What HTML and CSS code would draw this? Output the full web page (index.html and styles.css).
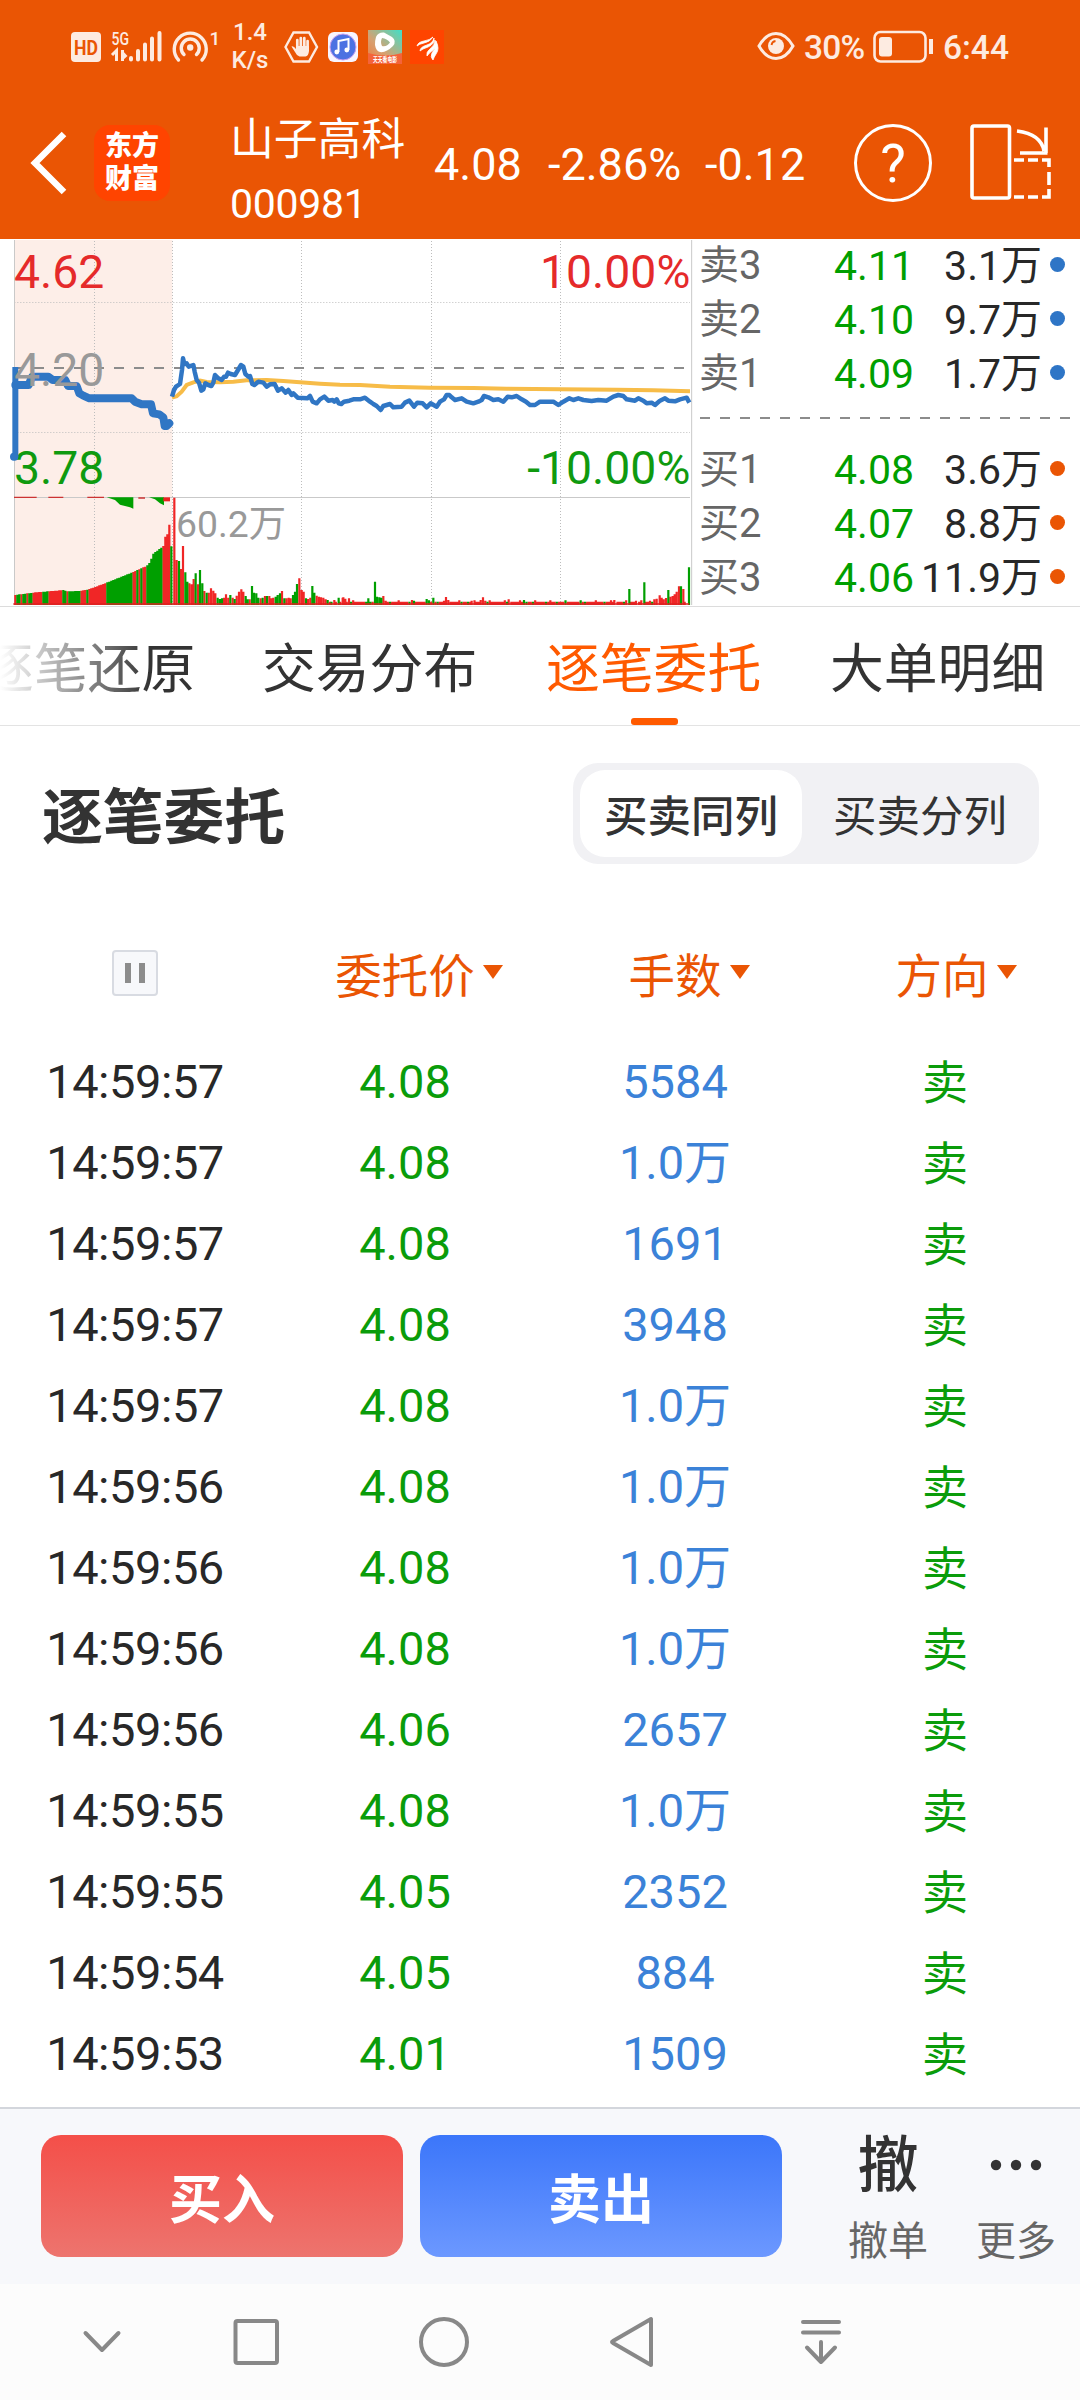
FILE: index.html
```html
<!DOCTYPE html>
<html lang="zh-CN">
<head>
<meta charset="utf-8">
<title>山子高科 000981</title>
<link rel="stylesheet" href="styles.css">
</head>
<body>
<header class="top">
  <div class="status">
    <svg class="st-icons" width="162" height="44" viewBox="66 20 162 44">
      <rect x="71" y="32" width="30" height="30" rx="4" fill="#fdebe1"/>
      <text class="hd" x="86" y="54.500" text-anchor="middle" textLength="24" lengthAdjust="spacingAndGlyphs">HD</text>
      <text class="g5" x="111.500" y="44.500" textLength="17.500" lengthAdjust="spacingAndGlyphs">5G</text>
      <path d="M112 55l4.500-4.500V61M122.500 50v11" fill="none" stroke="#fdebe1" stroke-width="3"/><path d="M122 50l5.500 6-5.500 5z" fill="#fdebe1"/>
      <path d="M131 58v1.500M138 51v8.500M145 44.500v15M152 38.500v21M159.500 33v26.500" stroke="#fdebe1" stroke-width="4" stroke-linecap="round"/>
      <g fill="none" stroke="#fdebe1" stroke-width="3.400" stroke-linecap="round"><path d="M178.500 60a16 16 0 1 1 23.500 0M184 54.500a9 9 0 1 1 12.500 0"/></g>
      <circle cx="190.200" cy="47.500" r="3.200" fill="#fdebe1"/>
      <text class="g5" x="209.500" y="44.500">1</text>
    </svg>
    <div class="speed"><span>1.4</span><span>K/s</span></div>
    <svg class="st-apps" width="162" height="40" viewBox="283 27 162 40">
      <path d="M285.500 47l8-14.500h15.500l8 14.500-8 14.500h-15.500z" fill="none" stroke="#fdebe1" stroke-width="2.400"/>
      <path d="M297.300 40v8M300.800 38v9M304.300 38v9M307.600 41v8" stroke="#fdebe1" stroke-width="2.700" stroke-linecap="round"/><path d="M291.500 46.500q2-.8 4.500 2.500v-3h13v5q-.5 5-3.500 5.500h-6q-3-1-4.500-4.500z" fill="#fdebe1"/>
      <rect x="328" y="32" width="30" height="30" rx="6" fill="#f8f5ff"/>
      <circle cx="343" cy="47" r="13" fill="#4c72e2" stroke="#c9a0ee" stroke-width="1"/>
      <path d="M338.500 52v-11l10-2v11" fill="none" stroke="#fff" stroke-width="2"/><circle cx="336.800" cy="52" r="2.400" fill="#fff"/><circle cx="346.800" cy="50" r="2.400" fill="#fff"/>
      <defs><linearGradient id="vid" x1="0" y1="1" x2="1" y2="0"><stop offset="0" stop-color="#f07a3c"/><stop offset=".4" stop-color="#d8a070"/><stop offset="1" stop-color="#3fe0c8"/></linearGradient></defs>
      <rect x="368" y="30" width="34" height="34" fill="url(#vid)"/><path d="M368 53q17 5 34 0v11h-34z" fill="#f4633a"/>
      <path fill-rule="evenodd" d="M376 37q2-5 8-4.500l8 4.500q5 4 1 9-7 7-13 6-4-1-5-7 0-5 1-8zM382 38q-2 4 0 8 5 1 8-3.500-3-4-8-4.500z" fill="#fff"/>
      <text class="vid-t" x="385" y="61.500" text-anchor="middle" textLength="24" lengthAdjust="spacingAndGlyphs">天天看电影</text>
      <rect x="410" y="30" width="34" height="34" fill="#ff4400"/>
      <path d="M417 46q1-4 7-5 6-1 9-4-3 5-9 6-5 1-7 3zM420 51q0-4 7-6 6-2 7-7 1 6-6 9-6 2-8 4zM427 56q-1-4 3-7 5-4 5-9 2 7-2 10-4 3-6 6zM433 60q-3-3-1-7 4-5 4-12 4 8 0 13-2 3-3 6z" fill="#fff" stroke="#fff" stroke-width=".8"/>
    </svg>
    <svg class="eye" width="38" height="30" viewBox="0 0 38 30"><path d="M2 15Q9 2.500 19 2.500T36 15Q29 27.500 19 27.500T2 15z" fill="none" stroke="#fdebe1" stroke-width="3"/><circle cx="19" cy="15" r="8" fill="#fdebe1"/><path d="M14.500 14q.5-3.500 4-4" fill="none" stroke="#ea5504" stroke-width="1.800"/></svg>
    <span class="pct">30%</span>
    <svg class="batt" width="62" height="34" viewBox="0 0 62 34"><rect x="1.500" y="2" width="51" height="29.500" rx="6" fill="none" stroke="#fdebe1" stroke-width="2.600"/><rect x="6" y="7" width="13" height="19.500" rx="3" fill="#fdebe1"/><path d="M58 9v15" stroke="#fdebe1" stroke-width="4"/></svg>
    <span class="clock">6:44</span>
  </div>
  <div class="bar">
    <svg class="back" width="40" height="66" viewBox="0 0 40 66"><path d="M34 4L5 33l29 29" fill="none" stroke="#fff" stroke-width="6.500"/></svg>
    <div class="logo"><span>东方</span><span>财富</span></div>
    <div class="name"><span class="cn">山子高科</span><span class="code">000981</span></div>
    <div class="quote"><span class="q1">4.08</span><span class="q2">-2.86%</span><span class="q3">-0.12</span></div>
    <div class="help">?</div>
    <svg class="rot" width="84" height="78" viewBox="0 0 84 78"><g fill="none" stroke="#fff" stroke-width="3.600"><rect x="2" y="3" width="37.500" height="72" rx="2"/><path d="M47 8Q71 11 74 28M76 4.500V30M50 30h27.500"/><path d="M44 37h10M58 37h10M72 37h7v7M79 49v13M79 66v8h-7M68 74H58M54 74H44"/></g></svg>
  </div>
</header>

<section class="market">
  <svg class="chart" width="694" height="366" viewBox="0 30 2082 1098">
    <rect x="43" y="30" width="474" height="1095" fill="#fdeee8"/>
    <g fill="none" stroke="#bdbdbd" stroke-width="3">
      <path stroke-dasharray="3 6" d="M283.500 33V1125M517.500 33V1125M904.500 33V1125M1294.500 33V1125M1681.500 33V1125M43 217.500H2070M43 607.500H2070"/>
      <path stroke="#c9c9c9" d="M43.500 30V1125M2075 30V1125M43 802.500H2070"/>
    </g>
    <path d="M42 414H2055" stroke="#8c8c8c" stroke-width="6" stroke-dasharray="30 30"/>
    <g id="bars" fill="none" stroke-width="6.600"></g>
    <path d="M42 802H110M145 802h45M262 802h50M415 804h20M485 808h22" stroke="#c33" stroke-width="4"/>
    <path d="M320 802H400V836L390 832 360 824 345 810zM447 802H492V826L480 820 465 808z" fill="#009f00"/>
    <path d="M490 802h20v12h-20z" fill="#e22"/>
    <text class="ax up" x="42" y="174">4.62</text>
    <text class="ax down" x="42" y="762">3.78</text>
    <text class="ax up" x="2071" y="174" text-anchor="end">10.00%</text>
    <text class="ax down" x="2071" y="762" text-anchor="end">-10.00%</text>
    <text class="vol" x="528" y="920">60.2万</text>
    <path d="M516 503l14-4 15-14 15-20 20-8 20-5 20 4 40 1 40-2 40-4 60-1 50 3 50 4 60 4 60 3 60 1 90 5 120 3 130 1 100 2 160 2 170 1 110 2 110 3" fill="none" stroke="#f7bc48" stroke-width="12"/>
    <g fill="none" stroke="#3076c4" stroke-linejoin="round">
      <path d="M46 411V680" stroke-width="18"/>
      <path d="M42 680h1M46 465H86L96 440H145L158 450H196L204 468H230L238 490 250 497 268 505H395L405 515 425 523H453L459 550 478 553 490 562 494 588H500L508 580" stroke-width="24" stroke-linecap="round"/>
      <path stroke-width="13.500" d="M516 500L522 480 528 470 540 462 546 420 549 385 553 402 560 400 566 410 580 405 584 425 590 450 597 458 604 482 610 478 616 460 625 465 634 468 640 458 645 435 655 445 665 450 672 440 678 440 684 428 692 432 705 435 714 420 723 405 730 410 736 432 745 440 750 438 757 462 763 465 775 455 790 458 800 470 810 463 824 462 834 482 845 475 857 488 865 480 875 495 880 490 893 503 922 505 930 498 938 515 950 520 960 508 973 500 985 512 998 510 1003 515 1010 508 1016 520 1024 522 1032 515 1048 512 1060 508 1080 508 1095 503 1110 515 1120 522 1130 528 1142 540 1150 528 1170 522 1180 532 1205 530 1215 518 1228 512 1242 530 1252 518 1268 520 1280 532 1292 520 1310 530 1320 515 1332 508 1340 495 1348 495 1355 502 1365 510 1385 505 1400 515 1420 520 1435 515 1445 510 1452 498 1465 502 1480 510 1495 508 1510 515 1523 500 1535 502 1550 498 1565 508 1578 515 1590 525 1605 525 1620 515 1660 515 1675 525 1690 515 1708 505 1720 510 1735 505 1750 510 1775 513 1795 510 1820 512 1840 500 1855 495 1870 498 1880 508 1905 512 1915 505 1930 512 1940 520 1955 518 1965 525 1980 512 1995 505 2005 512 2025 514 2040 508 2060 503 2068 518"/>
    </g>
    <text class="ax mid" x="42" y="468">4.20</text>
  </svg>
  <div class="book">
    <div class="lv"><span class="n">卖3</span><span class="p">4.11</span><span class="v">3.1万</span><i class="dot sell"></i></div>
    <div class="lv"><span class="n">卖2</span><span class="p">4.10</span><span class="v">9.7万</span><i class="dot sell"></i></div>
    <div class="lv"><span class="n">卖1</span><span class="p">4.09</span><span class="v">1.7万</span><i class="dot sell"></i></div>
    <div class="sep"></div>
    <div class="lv"><span class="n">买1</span><span class="p">4.08</span><span class="v">3.6万</span><i class="dot buy"></i></div>
    <div class="lv"><span class="n">买2</span><span class="p">4.07</span><span class="v">8.8万</span><i class="dot buy"></i></div>
    <div class="lv"><span class="n">买3</span><span class="p">4.06</span><span class="v">11.9万</span><i class="dot buy"></i></div>
  </div>
</section>

<nav class="tabs">
  <a class="tab faded">逐笔还原</a><a class="tab">交易分布</a><a class="tab on">逐笔委托</a><a class="tab">大单明细</a>
</nav>

<section class="head">
  <h1>逐笔委托</h1>
  <div class="seg"><span class="seg-i on">买卖同列</span><span class="seg-i">买卖分列</span></div>
</section>

<section class="orders">
  <div class="row th">
    <span><i class="pause"></i></span><span class="sort s1">委托价<i class="tri"></i></span><span class="sort s2">手数<i class="tri"></i></span><span class="sort s3">方向<i class="tri"></i></span>
  </div>
  <div class="row"><span class="t">14:59:57</span><span class="g">4.08</span><span class="q">5584</span><span class="d">卖</span></div>
  <div class="row"><span class="t">14:59:57</span><span class="g">4.08</span><span class="q">1.0万</span><span class="d">卖</span></div>
  <div class="row"><span class="t">14:59:57</span><span class="g">4.08</span><span class="q">1691</span><span class="d">卖</span></div>
  <div class="row"><span class="t">14:59:57</span><span class="g">4.08</span><span class="q">3948</span><span class="d">卖</span></div>
  <div class="row"><span class="t">14:59:57</span><span class="g">4.08</span><span class="q">1.0万</span><span class="d">卖</span></div>
  <div class="row"><span class="t">14:59:56</span><span class="g">4.08</span><span class="q">1.0万</span><span class="d">卖</span></div>
  <div class="row"><span class="t">14:59:56</span><span class="g">4.08</span><span class="q">1.0万</span><span class="d">卖</span></div>
  <div class="row"><span class="t">14:59:56</span><span class="g">4.08</span><span class="q">1.0万</span><span class="d">卖</span></div>
  <div class="row"><span class="t">14:59:56</span><span class="g">4.06</span><span class="q">2657</span><span class="d">卖</span></div>
  <div class="row"><span class="t">14:59:55</span><span class="g">4.08</span><span class="q">1.0万</span><span class="d">卖</span></div>
  <div class="row"><span class="t">14:59:55</span><span class="g">4.05</span><span class="q">2352</span><span class="d">卖</span></div>
  <div class="row"><span class="t">14:59:54</span><span class="g">4.05</span><span class="q">884</span><span class="d">卖</span></div>
  <div class="row"><span class="t">14:59:53</span><span class="g">4.01</span><span class="q">1509</span><span class="d">卖</span></div>
</section>

<footer class="actions">
  <button class="btn buy-b">买入</button>
  <button class="btn sell-b">卖出</button>
  <div class="act a1"><span class="ic">撤</span><span class="lb">撤单</span></div>
  <div class="act a2"><span class="ic"><svg width="56" height="14" viewBox="0 0 56 14"><g fill="#333"><circle cx="8" cy="7" r="5.200"/><circle cx="28" cy="7" r="5.200"/><circle cx="48" cy="7" r="5.200"/></g></svg></span><span class="lb">更多</span></div>
</footer>

<div class="sysnav">
  <svg width="1080" height="116" viewBox="0 2284 1080 116"><g fill="none" stroke="#888" stroke-width="4" stroke-linecap="round" stroke-linejoin="round"><path d="M85.500 2333L102 2350l16.500-17"/><rect x="235.500" y="2321" width="41.500" height="42" rx="2"/><circle cx="444" cy="2342" r="23"/><path d="M651 2319v46l-38-22q-2-1 0-2z"/><path d="M803 2322h36M803 2332.500h36M821 2342v20M807 2347.500l14 14.500 14-14.500"/></g></svg>
</div>
<script src="chart.js"></script>
</body>
</html>
```
FILE: styles.css
```css
* { box-sizing: border-box; }
body { margin: 0; width: 1080px; height: 2400px; overflow: hidden; background: #fff; font-family: Roboto, "Noto Sans CJK SC", sans-serif; color: #282828; display: flex; flex-direction: column; }
i { font-style: normal; }
.top { height: 239px; background: #ea5504; color: #fff; flex: none; display: flex; flex-direction: column; }
.status { height: 92px; display: flex; align-items: flex-start; color: #fdebe1; padding-left: 66px; }
.st-icons { margin-top: 20px; flex: none; }
.hd { font: 700 20px Roboto, sans-serif; fill: #ea5504; }
.g5 { font: 500 19px Roboto, sans-serif; fill: #fdebe1; }
.speed { width: 50px; margin: 18px 13px 0 -3px; display: flex; flex-direction: column; align-items: center; font-size: 24px; line-height: 28px; font-weight: 500; }
.st-apps { margin: 27px 0 0 -5px; flex: none; }
.vid-t { font: 700 7px "Noto Sans CJK SC", sans-serif; fill: #fff; }
.eye { margin: 31px 0 0 312px; flex: none; }
.pct, .clock { font-size: 33.500px; line-height: 40px; font-weight: 500; margin-top: 28px; }
.pct { width: 69px; margin-left: 9px; letter-spacing: -.8px; }
.batt { margin: 30px 0 0 0; flex: none; }
.clock { margin-left: 8px; }
.bar { height: 147px; display: flex; align-items: flex-start; }
.back { margin: 38px 0 0 30px; flex: none; }
.logo { width: 76px; height: 76px; margin: 33px 0 0 24px; border-radius: 16px; background: #ff4400; display: flex; flex-direction: column; align-items: center; font: 900 27px/33px "Noto Sans CJK SC", sans-serif; padding-top: 2px; }
.name { margin: 22px 0 0 60px; width: 204px; display: flex; flex-direction: column; white-space: nowrap; }
.cn { font-size: 43.800px; line-height: 52px; }
.code { font-size: 41px; line-height: 52px; margin-top: 12px; letter-spacing: -.3px; }
.quote { display: flex; font-size: 45px; line-height: 60px; margin-top: 43px; width: 419px; white-space: nowrap; }
.q1 { width: 114px; } .q2 { width: 157px; }
.help { width: 78px; height: 78px; border: 3.500px solid #fff; border-radius: 50%; margin: 32px 0 0 1px; text-align: center; font-size: 54px; line-height: 73px; }
.rot { margin: 31px 0 0 38px; flex: none; }
.market { height: 368px; flex: none; display: flex; border-bottom: 1px solid #dcdcdc; padding-top: 1px; }
.chart { flex: none; }
.ax { font-size: 139px; }
.up { fill: #e52a2a; } .down { fill: #0f9a0f; } .mid { fill: #999; }
.vol { font-size: 112px; fill: #999; }
.book { flex: 1; padding: 0 0 0 5px; font-size: 41px; display: flex; flex-direction: column; }
.lv { height: 54px; line-height: 50px; display: flex; align-items: center; white-space: nowrap; }
.lv span { margin-top: -3px; }
.lv .n { width: 112px; color: #666; font-size: 40px; }
.lv .p { width: 103px; text-align: right; color: #009f00; }
.lv .v { width: 128px; text-align: right; }
.dot { width: 15px; height: 15px; border-radius: 50%; margin: -6px 0 0 8px; }
.sell { background: #2e75c6; } .buy { background: #ea5504; }
.sep { height: 2px; margin: 15px 0 25px 1px; background: repeating-linear-gradient(90deg, #8c8c8c 0 10px, transparent 10px 20px); width: 371px; }
.tabs { height: 119px; flex: none; border-bottom: 1px solid #e3e3e3; display: flex; gap: 70px; }
.tab { font-size: 53.800px; width: 214px; line-height: 126px; height: 118px; flex: none; white-space: nowrap; color: #333; position: relative; }
.tab:first-child { margin-left: -20px; }
.tab:nth-child(2) { margin-left: -2px; }
.tab.on { color: #ff5a00; }
.tab.on::after { content: ""; position: absolute; left: 85px; bottom: 0; width: 47px; height: 7px; border-radius: 3px; background: #ff5a00; }
.faded { background: linear-gradient(90deg, #fff 20px, #333 170px); -webkit-background-clip: text; background-clip: text; color: transparent !important; }
.head { height: 175px; flex: none; display: flex; justify-content: space-between; padding: 37px 41px 0 42px; }
h1 { margin: 0; font-size: 60.800px; line-height: 112px; font-weight: 700; color: #333; white-space: nowrap; }
.seg { width: 466px; height: 101px; border-radius: 25px; background: #f1f1f4; padding: 7px; display: flex; }
.seg-i { width: 222px; height: 87px; line-height: 95px; text-align: center; font-size: 43.500px; color: #333; margin-right: 7px; flex: none; }
.seg-i.on { background: #fff; border-radius: 25px; font-weight: 500; }
.orders { flex: none; height: 1206px; }
.row { display: grid; grid-template-columns: repeat(4, 270px); height: 81px; line-height: 81px; text-align: center; font-size: 47px; }
.row.th { height: 140px; color: #ea5504; font-size: 46.500px; line-height: 154px; }
.sort { display: flex; justify-content: center; align-items: center; gap: 8px; padding-left: 28px; height: 151px; }
.s3 { padding-left: 22px; }
.tri { border: 10px solid transparent; border-top: 14px solid #ea5504; border-bottom: 0; margin-top: -9px; }
.pause { display: block; width: 46px; height: 46px; margin: 49px auto 0; border: 2px solid #d8dbe2; border-radius: 4px; background: linear-gradient(90deg, transparent 11px, #8c8c8c 11px 17px, transparent 17px 25px, #8c8c8c 25px 31px, transparent 31px) 0 11px / 42px 20px no-repeat #f7f8fb; }
.t { letter-spacing: -.45px; } .g, .d { color: #0a9c0a; } .q { color: #3b82d8; } .d { font-size: 46px; line-height: 84px; height: 81px; }
.actions { height: 177px; flex: none; background: #f7f8fb; border-top: 2px solid #d3d6dc; display: flex; padding: 26px 0 0 41px; }
.btn { width: 362px; height: 122px; border: 0; border-radius: 20px; font: 700 53px/122px "Noto Sans CJK SC", sans-serif; color: #fff; padding: 0; flex: none; }
.buy-b { background: linear-gradient(#f44f49, #ed746e); margin-right: 17px; }
.sell-b { background: linear-gradient(#3b76fa, #6c98ff); }
.act { width: 128px; display: flex; flex-direction: column; align-items: center; flex: none; }
.a1 { margin-left: 42px; }
.ic { height: 62px; line-height: 62px; font-size: 61px; font-weight: 500; color: #333; display: flex; align-items: center; }
.a1 .ic { padding-bottom: 1px; }
.a2 .ic { height: 60px; margin-bottom: 2px; }
.lb { font-size: 40px; line-height: 50px; color: #666; margin-top: 20px; }
.sysnav { height: 116px; background: #fcfcfc; flex: none; }
.sysnav svg { display: block; }
```
FILE: chart.js
```js
// Volume bars. Values are [x, top, colour] in chart units; the baseline is 1125.
const BASE = 1125;
const paths = { r: '', g: '' };
const add = (x, top, c) => { paths[c] += `M${x} ${BASE}V${top}`; };

// Call auction: a smooth envelope with green runs over red.
const env = [[45,1095],[100,1088],[190,1080],[200,1084],[240,1083],[270,1077],[320,1058],[390,1030],[440,1008],[452,995],[457,973],[490,948],[496,920],[504,910],[508,884],[515,960]];
const green = [[52,60],[66,78],[84,94],[130,142],[190,196],[205,240],[258,264],[320,395],[408,414],[420,426],[440,488],[510,518]];
for (let x = 46; x < 517; x += 6) {
  const i = env.findIndex(p => p[0] > x), a = env[Math.max(i - 1, 0)], b = env[i] || env[env.length - 1];
  const y = b[0] === a[0] ? a[1] : a[1] + (b[1] - a[1]) * (x - a[0]) / (b[0] - a[0]);
  add(x, Math.round(y), green.some(g => x >= g[0] && x <= g[1]) ? 'g' : 'r');
}

// Continuous trading, bar by bar.
const main = '523,803r 530,990r 537,993g 543,1017r 549,948r 556,1027g 562,1055g 568,1060r 575,1063r 581,1047r 587,1030g 594,1063r 600,1020g 607,1060g 613,1083r 620,1088g 626,1088r 633,1075r 640,1082r 646,1090r 653,1103g 660,1107g 666,1105g 672,1103r 678,1093r 685,1103r 691,1095g 698,1103r 704,1107g 710,1097r 717,1085r 724,1078r 730,1085r 737,1098g 743,1108g 749,1108r 756,1068g 762,1088g 769,1090g 775,1103g 782,1105r 788,1103g 795,1098r 801,1098g 808,1098r 814,1105r 820,1103r 827,1100g 833,1095g 840,1090g 846,1083r 853,1105g 859,1105r 866,1103r 872,1105r 879,1095g 885,1085g 891,1062g 898,1045r 905,1080r 911,1085r 918,1105g 924,1107r 931,1103r 937,1068g 943,1088g 950,1097r 957,1100r 963,1102r 970,1103r 977,1108r 983,1110g 990,1115r 1003,1110r 1016,1103g 1030,1102r 1036,1106r 1047,1105r 1105,1105g 1028,1103r 1125,1055g 1131,1100g 1138,1102g 1144,1103g 1150,1098r 1157,1112r 1236,1110r 1242,1112g 1280,1107g 1300,1103g 1332,1112r 1338,1101r 1345,1110r 1415,1112r 1442,1110r 1449,1102r 1456,1112r 1526,1108r 1572,1110g 1843,1110r 1888,1077g 1908,1112r 1933,1057g 1950,1112r 1963,1108r 1970,1106r 1979,1096r 1985,1103r 1991,1108r 1998,1104r 2005,1080g 2011,1100r 2018,1098r 2024,1093r 2030,1085r 2037,1069r 2043,1069g 2050,1077r 2067,1012g';
const taken = new Set();
main.split(' ').forEach(s => {
  const [x, rest] = s.split(',');
  taken.add(Math.round(x / 6.5));
  add(+x, parseInt(rest, 10), rest.slice(-1));
});
for (let k = 150; k < 317; k++) {
  if (!taken.has(k)) add(k * 6.5, k % 7 === 2 ? 1111 : 1115, k % 11 === 4 || k % 9 === 0 ? 'g' : 'r');
}
document.getElementById('bars').innerHTML =
  `<path d="${paths.r}" stroke="#f02626"/><path d="${paths.g}" stroke="#009f00"/><path d="M40 1122H2068" stroke="#d22" stroke-width="4"/>`;
```
